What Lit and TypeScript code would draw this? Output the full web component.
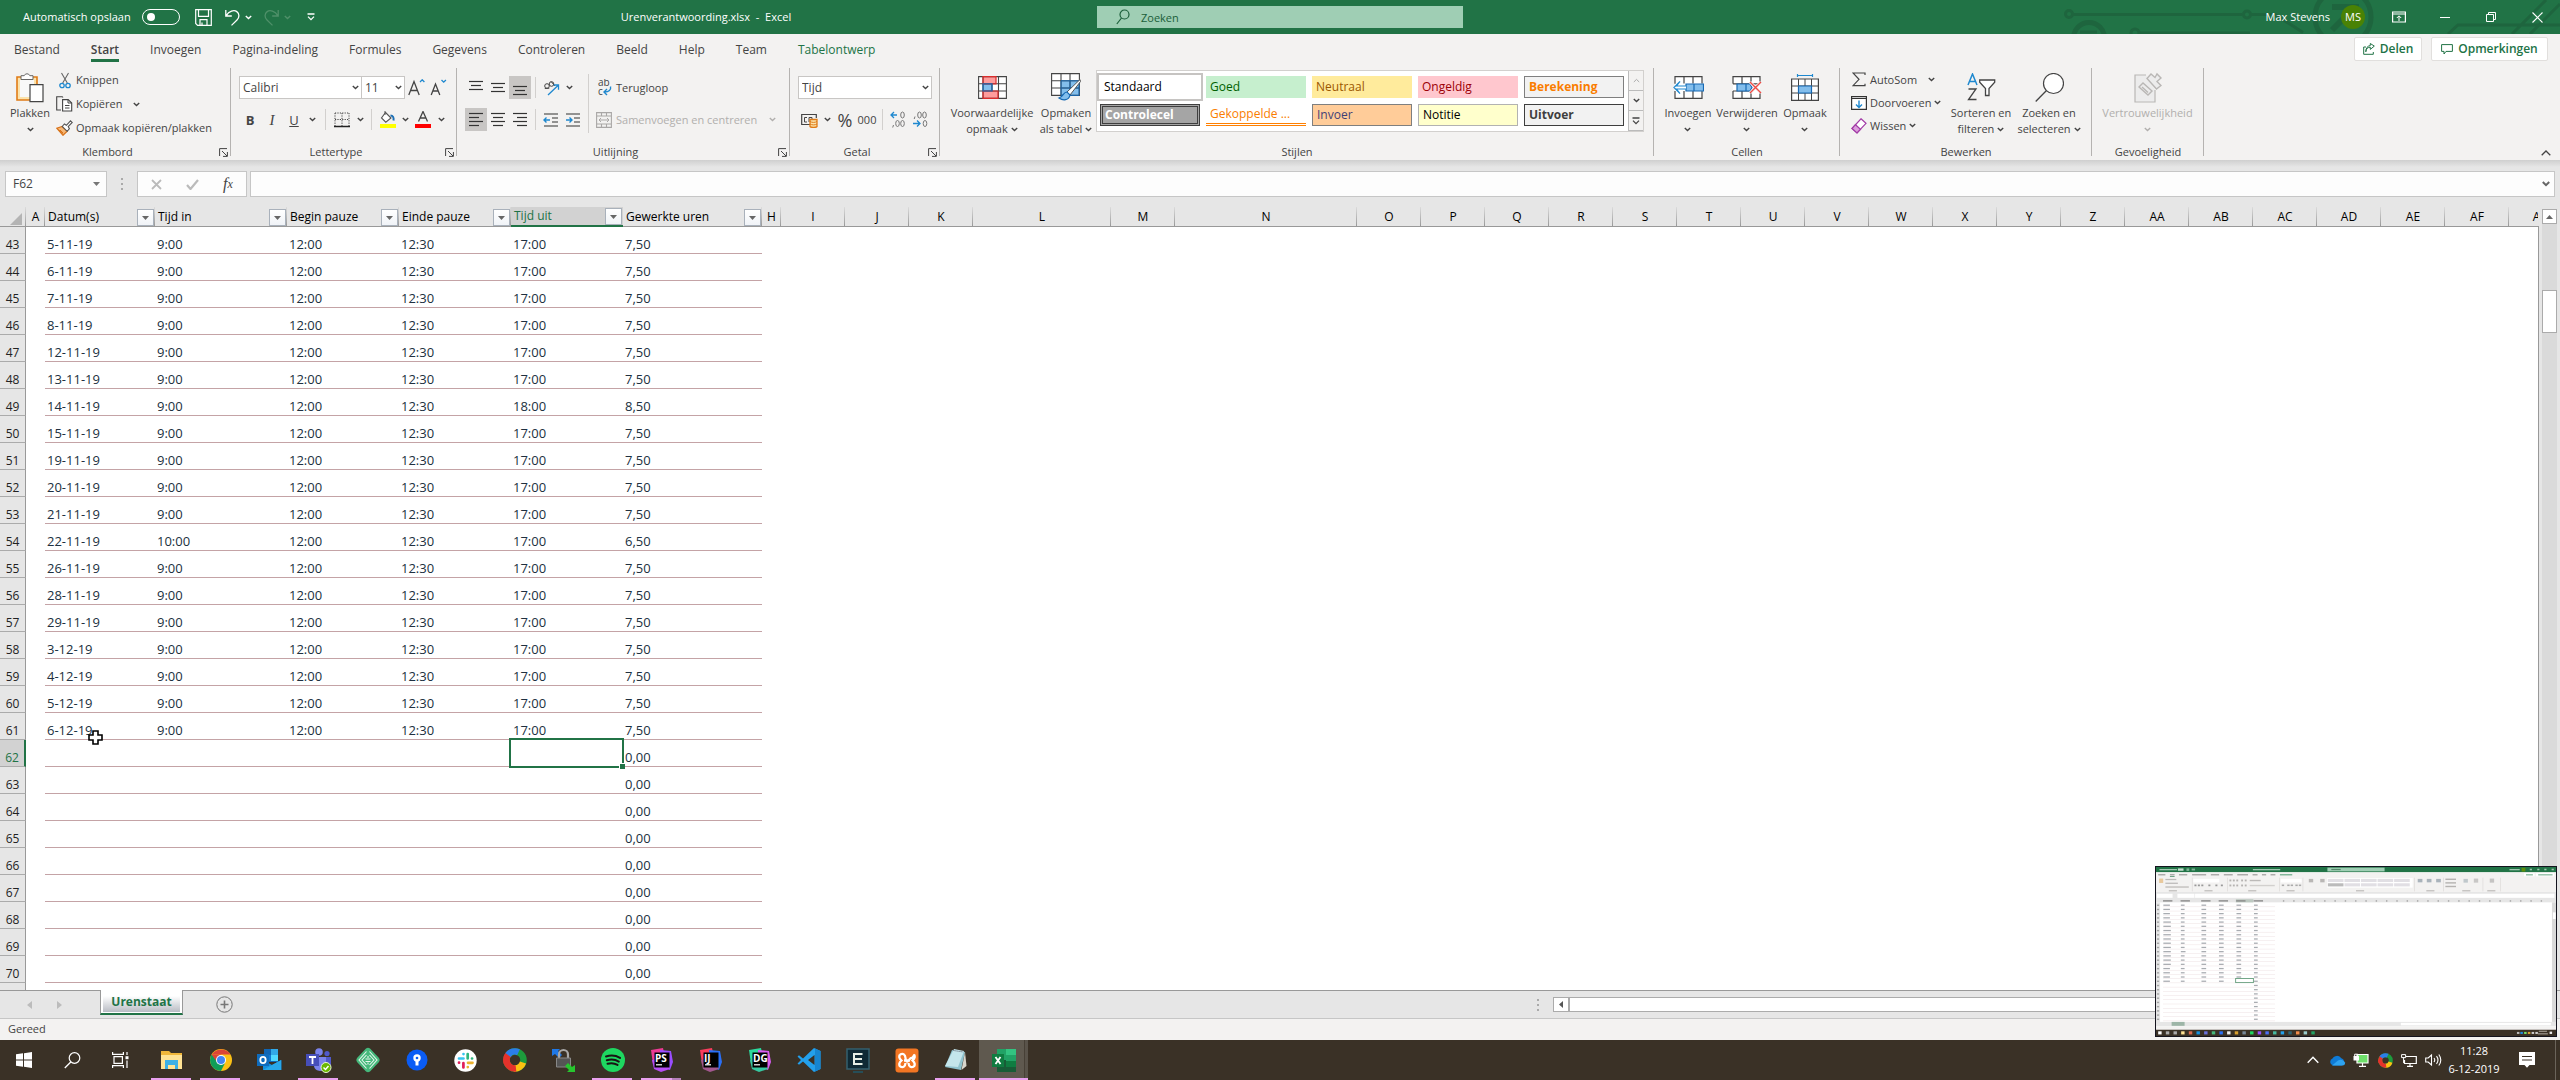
import { LitElement, html, css, svg, nothing } from "lit";
import { customElement } from "lit/decorators.js";
import { classMap } from "lit/directives/class-map.js";

type Part = unknown;

const draw = (w: number, h: number, body: Part) => html`<svg width=${w} height=${h} viewBox="0 0 ${w} ${h}" fill="none" aria-hidden="true">${body}</svg>`;

const chev = (color = "#444") => draw(7, 5, svg`<path d="M.8 1l2.7 2.6L6.2 1" stroke=${color} stroke-width="1.4"/>`);

/* ---------- ribbon icons ---------- */
const I = {
  save: draw(17, 17, svg`<path d="M.7 .7h15.6v15.6H2.6L.7 14.4zM3.5.7v6.6h10V.7M5 16v-5.300h7V16M7 13.500v2.500" stroke="#fff" stroke-width="1.200"/>`),
  undo: draw(15, 17, svg`<path d="M.8 1v6h6M1.200 6.600C4 2 9 .6 11.800 2.600c3 2.200 2.600 6 .2 8.400L6.500 16.400" stroke="#fff" stroke-width="1.300"/>`),
  redo: draw(15, 17, svg`<path d="M14.200 1v6h-6M13.800 6.600C11 2 6 .6 3.200 2.600c-3 2.200-2.600 6-.2 8.400l5.500 5.400" stroke="#4f9069" stroke-width="1.300"/>`),
  custom: draw(8, 8, svg`<path d="M.5 1h7M1 3.600l3 3 3-3" stroke="#fff" stroke-width="1.300"/>`),
  search: draw(14, 16, svg`<circle cx="8.500" cy="5.500" r="4.500" stroke="#1b5e39" stroke-width="1.200"/><path d="M5.500 9L.8 15" stroke="#1b5e39" stroke-width="1.200"/>`),
  display: draw(14, 12, svg`<path d="M.6 1h12.800v10H.6zM.6 3h12.800" stroke="#fff" stroke-width="1.200"/><path d="M7 10V5M4.800 7L7 4.800 9.200 7" stroke="#fff"/>`),
  min: draw(10, 10, svg`<path d="M0 5.500h10" stroke="#fff"/>`),
  restore: draw(10, 10, svg`<path d="M.5 2.500h7v7h-7zM2.500 2.500v-2h7v7h-2" stroke="#fff"/>`),
  close: draw(11, 11, svg`<path d="M.5.5l10 10M10.500.5l-10 10" stroke="#fff" stroke-width="1.100"/>`),
  share: draw(12, 12, svg`<path d="M3 4H.7v7.300h9.600V9" stroke="#217346"/><path d="M2.800 8.800C3 5.600 5 4.200 7.300 4.200V6.400l4-3.300-4-2.600v2C4.500 3 2.800 5 2.800 8.800z" stroke="#217346"/>`),
  comment: draw(12, 11, svg`<path d="M.6.6h10.800v6.800H5L3 10V7.400H.6z" stroke="#217346"/>`),
  paste: draw(28, 31, svg`<path d="M1 5h20v23H1z" fill="#fbe3ac" stroke="#e07b16" stroke-width="1.600"/><path d="M4 8h14v17H4z" fill="#f8f8f8"/><path d="M5 7.500V3.700h3.200a3 3 0 0 1 5.600 0H17v3.800z" fill="#fff" stroke="#666"/><path d="M14 12.700h13v17H14z" fill="#fff" stroke="#444" stroke-width="1.200"/>`),
  cut: draw(12, 17, svg`<path d="M2.500 1l5.800 10M9.500 1L3.700 11" stroke="#666" stroke-width="1.100"/><circle cx="3" cy="13.500" r="2.200" stroke="#1e88cf" stroke-width="1.300"/><circle cx="9" cy="13.500" r="2.200" stroke="#1e88cf" stroke-width="1.300"/>`),
  copy: draw(17, 16, svg`<path d="M5 14H.7V.7h5.600L7 1.500" stroke="#444" stroke-width="1.100"/><path d="M6.600 3.600h5.600l3.500 3.400v8H6.600z" fill="#fff" stroke="#444" stroke-width="1.100"/><path d="M12 3.700V7h3.500M9 9.500h4.500M9 12h4.500" stroke="#444"/>`),
  brush: draw(17, 16, svg`<path d="M.7 8.200l5.500-1.700 5 4.800L7 15.300z" fill="#f6b877" stroke="#d9731a" stroke-width="1.200"/><path d="M4 10l3 3M2.500 9.500l4.500 5" stroke="#d9731a"/><path d="M6.200 6.500L8.400 4l2 1.300L14.500.8l1.700 1.600-4 4.200 1.200 2-2.200 2.700z" fill="#fff" stroke="#555" stroke-width="1.100"/>`),
  big: draw(17, 17, svg`<path d="M.8 16L6 2.500 11.200 16M2.500 11.500h7" stroke="#444" stroke-width="1.300"/><path d="M12 3l2.200-2.200L16.400 3" stroke="#1e88cf" stroke-width="1.300"/>`),
  small: draw(17, 17, svg`<path d="M1.200 16L5.500 5l4.300 11M2.800 12h5.600" stroke="#444" stroke-width="1.300"/><path d="M11.500 1l2.200 2.200L15.900 1" stroke="#1e88cf" stroke-width="1.300"/>`),
  borders: draw(16, 16, svg`<path d="M1 1h14M1 1v13M15 1v13M8 1v13M1 7.500h14" stroke="#444" stroke-dasharray="1.200 1.200"/><path d="M0 14.500h16" stroke="#222" stroke-width="1.500"/>`),
  fill: draw(17, 17, svg`<path d="M6.500 1.500L12 7l-5.200 4.200L2.500 7z" fill="#fff" stroke="#555" stroke-width="1.100"/><path d="M6 4V0" stroke="#555"/><path d="M11.500 4.500c2.500 0 3.500 2 3 5" stroke="#1c6fb5" stroke-width="2"/><path d="M1 13h16v4H1z" fill="#ff0"/>`),
  color: draw(16, 17, svg`<path d="M3.500 10.500L8 .5l4.500 10M5 7h6" stroke="#444" stroke-width="1.300"/><path d="M0 13h16v4H0z" fill="#f00"/>`),
  orient: draw(17, 16, svg`<g stroke="#444"><circle cx="4" cy="6" r="2.300"/><path d="M1.800 8.500l4.500-.3M8 1.500l4 4.500"/><circle cx="8.500" cy="4" r="2.300"/></g><path d="M5 15L15 5.500M10.800 5h4.700v4.700" stroke="#1e88cf" stroke-width="1.300"/>`),
  wrap: draw(15, 17, svg`<text x="1" y="7" font-family="Open Sans, Noto Sans, sans-serif" font-size="10" fill="#444">ab</text><text x="1" y="16" font-family="Open Sans, Noto Sans, sans-serif" font-size="10" fill="#444">c</text><path d="M13.500 7.500c.8 3.500-1.500 5.500-6 5.500M10 10l-3 3 3 3" stroke="#1e88cf" stroke-width="1.400"/>`),
  merge: draw(16, 16, svg`<path d="M.6.6h14.800v14.800H.6zM.6 4h14.800M.6 12h14.800M5.500.6V4M10.500.6V4M5.500 12v3.400M10.500 12v3.400" stroke="#a9a7a6" stroke-width="1.100"/><path d="M3 8h10M5 6L3 8l2 2M11 6l2 2-2 2" stroke="#a9a7a6"/>`),
  currency: draw(17, 16, svg`<path d="M9 12.500H.7v-10h14.600V6" stroke="#444" stroke-width="1.200"/><path d="M6 5.500H3.500v4.500H6M8 10V5.500h3V8" stroke="#444"/><path d="M9 7.500h7v7c-1 1.300-6 1.300-7 0z" fill="#fbe3ac" stroke="#e07b16" stroke-width="1.300"/><path d="M9 9.500c2 1.200 5 1.200 7 0M9 12c2 1.200 5 1.200 7 0" stroke="#e07b16"/>`),
  decMore: draw(16, 17, svg`<path d="M7 4H1M4 1L1 4l3 3" stroke="#1e88cf" stroke-width="1.300"/><g stroke="#777"><ellipse cx="12.500" cy="4" rx="1.800" ry="3"/><ellipse cx="7.500" cy="12.500" rx="1.800" ry="3"/><ellipse cx="12.500" cy="12.500" rx="1.800" ry="3"/><path d="M3.500 14l-.8 2.500"/></g>`),
  decLess: draw(16, 17, svg`<path d="M1 12.500h7M5 9.500l3 3-3 3" stroke="#1e88cf" stroke-width="1.300"/><g stroke="#777"><ellipse cx="7.500" cy="4" rx="1.800" ry="3"/><ellipse cx="12.500" cy="4" rx="1.800" ry="3"/><ellipse cx="13" cy="12.500" rx="1.800" ry="3"/><path d="M3 5.500l-.8 2.500"/></g>`),
  cond: draw(29, 23, svg`<path d="M.6.6h27.800v21.800H.6z" fill="#fff"/><path d="M5 .6h13v7.200H5zM5 15h15v7.400H5z" fill="#ff9c9c"/><path d="M5 7.800h9V15H5z" fill="#83beec"/><path d="M.6.6h27.800v21.800H.6zM.6 7.800h27.800M.6 15h27.800M5 .6v21.800M14 7.800V15M20.500.6v21.800" stroke="#444" stroke-width="1.100"/><path d="M5 .6h13v7.200H5zM5 15h15v7.400H5z" stroke="#dd2c2c" stroke-width="1.200"/><path d="M5 7.800h9V15H5z" stroke="#1769b3" stroke-width="1.200"/>`),
  fmtTable: draw(30, 28, svg`<path d="M.6.6h27.800v21.800H.6z" fill="#fff"/><path d="M10 7.800h18.400v14.600H10z" fill="#83beec"/><path d="M.6.6h27.800v21.800H.6zM.6 7.800h27.800M.6 15h27.800M10 .6v21.800M19 .6v21.800" stroke="#444" stroke-width="1.100"/><path d="M10 7.800h18v14.600H10zM10 15h18M19 7.800v14" stroke="#1769b3"/><path d="M29 6.500L16 19l3 3L29.500 8.500z" fill="#fff" stroke="#555"/><path d="M16 19c-4 0-3.500 5-8 6 4 3 10 2.500 11-3z" fill="#83beec" stroke="#1769b3" stroke-width="1.200"/>`),
  insert: draw(32, 23, svg`<path d="M3 .6h27v21.800H3z" fill="#fff"/><path d="M3 7.800V.6h27v7M3 15v7.400h27V15M12 .6v7M21 .6v7M12 15v7.400M21 15v7.400" stroke="#444" stroke-width="1.200"/><path d="M14 8h17.500v7H14zM22 8v7" fill="#83beec" stroke="#1769b3" stroke-width="1.200"/><path d="M14 10H4.500L8 5.500 2 11.500l6 6L4.500 13H14" fill="#fff" stroke="#1e88cf" stroke-width="1.200"/>`),
  remove: draw(30, 23, svg`<path d="M1 .6h27v21.800H1z" fill="#fff"/><path d="M1 7.800V.6h27v7M1 7.800h27M1 15v7.400h27V17M1 15h18M10 .6v7M19 .6v7M10 15v7.400M19 15v7.400" stroke="#444" stroke-width="1.200"/><path d="M5 8h13l2 3.500-2 3.500H5zM14 8v7" fill="#83beec" stroke="#1769b3" stroke-width="1.200"/><path d="M18 6l11 11M29 6L18 17" stroke="#f3f2f1" stroke-width="3"/><path d="M18 6l11 11M29 6L18 17" stroke="#ef4b45" stroke-width="1.400"/>`),
  format: draw(28, 27, svg`<path d="M.6 5h26.800v21.400H.6z" fill="#fff" stroke="#444" stroke-width="1.200"/><path d="M.6 12h26.800M.6 19h26.800M7.500 5v21.400M20.500 5v21.400M14 5v7M14 19v7" stroke="#444"/><path d="M7.500 12h13v7h-13z" fill="#83beec" stroke="#1769b3" stroke-width="1.200"/><path d="M6.500 1.500h15M6.500 0v3M21.500 0v3" stroke="#1e88cf" stroke-width="1.200"/>`),
  sum: draw(14, 15, svg`<path d="M13 3V1H1l6 6.300-6 6.400h12v-2" stroke="#444" stroke-width="1.200"/>`),
  fillDown: draw(16, 14, svg`<path d="M.6.6h14.800v12.800H.6z" fill="#fff" stroke="#333" stroke-width="1.200"/><path d="M.6 2.500h14.800" stroke="#333"/><path d="M8 4.500v7M5 8.500l3 3 3-3" stroke="#1e88cf" stroke-width="1.400"/>`),
  erase: draw(16, 16, svg`<path d="M10 .8l5 4.500L6 15 1 10.500z" fill="#fff" stroke="#a23ba6" stroke-width="1.200"/><path d="M4.500 6.700l5 4.500L6 15 1 10.500z" fill="#dc9fdd" stroke="#a23ba6" stroke-width="1.200"/>`),
  sort: draw(29, 28, svg`<path d="M1 12L5.500 1l4.500 11M2.500 8.500h6" stroke="#1e88cf" stroke-width="1.500"/><path d="M1.500 16h7.500L1.500 26.500h8" stroke="#444" stroke-width="1.300"/><path d="M12.700 7h15v2.300l-5.700 6.200v7h-3.500v-7l-5.800-6.200z" fill="#fff" stroke="#444" stroke-width="1.300"/>`),
  find: draw(29, 29, svg`<circle cx="18.500" cy="10.500" r="10" fill="#fff" stroke="#444" stroke-width="1.200"/><path d="M11.500 17.500L.7 28.500" stroke="#444" stroke-width="1.300"/>`),
  label: draw(28, 31, svg`<path d="M12 3H1v27h20V18" stroke="#b9b7b5" stroke-width="1.200" fill="#ececec"/><g stroke="#b9b7b5" stroke-width="1.400"><path d="M5 15l4-4 9 8-4 4zM8 15l6 5.500"/><path d="M13 6.500l4-4.500 4 3.500 2-3.500 4 4-4 3.500 4 4-4.500 3.500z" fill="#ececec"/></g>`),
  launcher: draw(9, 9, svg`<path d="M.6 8V.6H8M3 3l5 5M8.400 4v4.400H4" stroke="#444"/>`),
};

const lines = (rows: [number, number, number][]) =>
  draw(16, 16, rows.map(([x1, x2, y]) => svg`<path d="M${x1} ${y}.500H${x2}" stroke="#333" stroke-width="1.200"/>`));
const A = {
  top: lines([[1, 15, 1], [3, 13, 5], [1, 15, 9]]),
  middle: lines([[1, 15, 3], [3, 13, 7], [1, 15, 11]]),
  bottom: lines([[1, 15, 6], [3, 13, 10], [1, 15, 14]]),
  left: lines([[1, 15, 1], [1, 11, 5], [1, 15, 9], [1, 11, 13]]),
  center: lines([[1, 15, 1], [3, 13, 5], [1, 15, 9], [3, 13, 13]]),
  right: lines([[1, 15, 1], [5, 15, 5], [1, 15, 9], [5, 15, 13]]),
};
const indent = (d: string) => draw(16, 16, svg`<path d="M1 2h14M9 6h6M9 10h6M1 14h14" stroke="#333" stroke-width="1.200"/><path d=${d} stroke="#1e88cf" stroke-width="1.400"/>`);

/* ---------- taskbar icons ---------- */
const jb = (txt: string, a: string, b: string, c: string) => draw(24, 24, svg`
  <path d="M1 2l12-2 3 14L3 16z" fill=${a}/><path d="M10 2l11 1 2 11-3 8-10-4z" fill=${b}/><path d="M2 12l10-3 8 12-9 3-7-3z" fill=${c}/>
  <path d="M4.500 4.500h15v15h-15z" fill="#000"/><text x="5" y="13.500" font-family="Open Sans, Noto Sans, sans-serif" font-weight="700" font-size="10" fill="#fff">${txt}</text><path d="M6 16.800h6" stroke="#fff" stroke-width="1.200"/>`);
const swirl = (s: number) => html`<svg width=${s} height=${s} viewBox="0 0 24 24" fill="none" aria-hidden="true">
  <circle cx="12" cy="12" r="8.500" stroke="#1d9b3c" stroke-width="6.500"/>
  <path d="M4 15A8.500 8.500 0 0 1 6.500 5.500" stroke="#e5322b" stroke-width="6.500"/><path d="M5 7A8.500 8.500 0 0 1 15.500 4.300" stroke="#2b7de9" stroke-width="6.500"/>
  <path d="M20 14.500A8.500 8.500 0 0 1 11 20.400" stroke="#fbc112" stroke-width="6.500"/><path d="M13 20.400A8.500 8.500 0 0 1 3.600 11" stroke="#e5322b" stroke-width="6.500"/></svg>`;
const T = {
  start: draw(16, 16, svg`<path d="M0 2.300L7 1.300v6.200H0zM8 1.200L16 0v7.500H8zM0 8.500h7v6.200l-7-1zM8 8.500h8V16l-8-1.200z" fill="#fff"/>`),
  search: draw(17, 17, svg`<circle cx="10.500" cy="6" r="5.300" stroke="#fff" stroke-width="1.200"/><path d="M6.800 10L.8 16" stroke="#fff" stroke-width="1.300"/>`),
  view: draw(17, 16, svg`<path d="M.6 0v2.400h10.800V0M2 4.600h8.400v6.800H2zM.6 16v-2.400h10.800V16M15 0v3M15 8.500V16" stroke="#fff" stroke-width="1.200"/><path d="M13.500 4.200h3v3h-3z" fill="#fff"/>`),
  explorer: draw(23, 20, svg`<path d="M1 1h8l2 2h11v16H1z" fill="#f0b73a"/><path d="M1 5h21v14H1z" fill="#ffe394"/><path d="M5 10h13v9h-3v-4H8v4H5z" fill="#3cb0e5"/>`),
  chrome: draw(24, 24, svg`<circle cx="12" cy="12" r="11" fill="#fbc116"/><path d="M12 12L2.500 6.500A11 11 0 0 0 12 23l4-8z" fill="#0f9d58"/><path d="M3 6.500A11 11 0 0 1 21.500 6.500H12z" fill="#db4437"/><path d="M2.500 6.500H12L8 14z" fill="#db4437"/><circle cx="12" cy="12" r="5" fill="#fff"/><circle cx="12" cy="12" r="4" fill="#4285f4"/>`),
  outlook: draw(25, 24, svg`<path d="M7 1h14v13H7z" fill="#1066b5"/><path d="M14 1h7v6h-7z" fill="#32a9e7"/><path d="M7 7h7v6H7z" fill="#0f78d4"/><path d="M14 7h7v6h-7z" fill="#50d9ff"/><path d="M6 12l9 5 9.500-5v10H6z" fill="#1490df"/><path d="M6 22l18-10v10z" fill="#28a8ea"/><path d="M0 6h12v12H0z" fill="#0f6cbd"/><ellipse cx="6" cy="12" rx="2.700" ry="3.200" stroke="#fff" stroke-width="1.800"/>`),
  teams: draw(26, 25, svg`<circle cx="13" cy="4" r="3.800" fill="#7b83eb"/><circle cx="21" cy="5.500" r="2.600" fill="#5059c9"/><path d="M16 9h9v7c0 4-5 5-8 3z" fill="#5059c9"/><path d="M8 9h12v9c0 6-11 7-12 0z" fill="#7b83eb"/><path d="M0 6h13v12H0z" fill="#464eb8"/><path d="M3 9h7M6.500 9v7" stroke="#fff" stroke-width="1.800"/><circle cx="20" cy="19.500" r="5" fill="#6bb700" stroke="#e9f5d5"/><path d="M17.500 19.500l2 2 3-3.500" stroke="#fff" stroke-width="1.400"/>`),
  green: draw(26, 26, svg`<path d="M11 1.500q2-1.500 4 0l9 9.500q1.500 2 0 4l-9 9.500q-2 1.500-4 0L2 15q-1.500-2 0-4z" fill="#45b87b"/><path d="M11.500 4.500L4 13l7.500 8.500M14.500 4.500L22 13l-7.500 8.500M11.500 8L7 13l4.500 5M14.500 8l4.500 5-4.500 5M10.500 12h5M10.500 14.500h5M13 9v2M13 15.500v2" stroke="#e5f7ed" stroke-width="1.100"/>`),
  blue: draw(22, 22, svg`<circle cx="11" cy="11" r="10.500" fill="#0a5cf5"/><circle cx="11" cy="9" r="3.700" fill="#fff"/><path d="M9.500 12h3v4.500h-3z" fill="#fff"/><circle cx="11" cy="9" r="1.300" fill="#0a5cf5"/>`),
  slack: draw(23, 23, svg`<circle cx="11.500" cy="11.500" r="11.200" fill="#fff"/><g stroke-width="2.700" stroke-linecap="round"><path d="M9.500 5v.1M5 9.500h4.500" stroke="#36c5f0"/><path d="M13.700 5v4.500M18 9.500h.1" stroke="#2eb67d"/><path d="M14 13.800h4.500M13.800 18v.1" stroke="#ecb22e"/><path d="M9.400 14v4.500M5 13.700h.1" stroke="#e01e5a"/></g>`),
  lock: draw(25, 25, svg`<path d="M1 1h8l-2 2 4 4-3 3-4-4-3 2z" fill="#1f78e6"/><path d="M8 11V6.500a4.500 4.500 0 0 1 9 0V11" stroke="#a8a8a8" stroke-width="2.200"/><path d="M5.500 10h14v9h-14z" fill="#555" stroke="#888"/><path d="M24 24h-8l2-2-4-4 3-3 4 4 3-2z" fill="#27c62e"/>`),
  spotify: draw(24, 24, svg`<circle cx="12" cy="12" r="12" fill="#1ed760"/><path d="M5 8.500c5-1.500 10-1 14 1.400M5.800 12.300c4-1.200 8.500-.8 12 1.300M6.500 15.800c3.500-1 7-.7 10 1.100" stroke="#191414" stroke-width="2" stroke-linecap="round"/>`),
  ps: jb("PS", "#ee3a95", "#9a4dff", "#b74cf5"),
  ij: jb("IJ", "#f83d5d", "#2a6ff5", "#a2578e"),
  dg: jb("DG", "#2bd89d", "#d85cf0", "#36c8a0"),
  code: draw(24, 24, svg`<path d="M17 0l6.500 3v18L17 24 6 13.500l-4 3.200L.5 15.500 4 12 .5 8.500 2 7.300l4 3.200zM17.500 7L11 12l6.500 5z" fill="#23a0ec" fill-rule="evenodd"/><path d="M18 0.500l5.500 2.500v18L18 23.500z" fill="#1685d1"/>`),
  eterm: draw(24, 25, svg`<path d="M1 1h22v20H1z" fill="#0f2a35" stroke="#35606f" stroke-width="1.500"/><path d="M16.500 6H8v10h8.500M8 11h8" stroke="#e6efe6" stroke-width="2"/><path d="M7 24h10" stroke="#20586a" stroke-width="1.500"/>`),
  xampp: draw(24, 25, svg`<rect x=".5" y=".5" width="23" height="24" rx="3" fill="#f37623"/><path d="M5 6.500q5-2 5.500 3.500t3 2.500 3-2.500 3-3.500M5 18.500q5 2 5.500-3.500M19 18.500q-5 2-5.500-3.500M5 6.500q-2 3 1.500 6-3.500 3-1.500 6M19 6.500q2 3-1.500 6 3.500 3 1.500 6M9 12.500h6" stroke="#fff" stroke-width="2.300"/>`),
  notepad: draw(24, 24, svg`<path d="M8 2l13 2-4 18-16-3z" fill="#8fc3cf"/><path d="M10 1l10 2-6 16L1 18z" fill="#c4e6ec"/><path d="M21 4l1.500 14-5 4z" fill="#d9d6cd"/><path d="M9.500 2.500l10 1.500" stroke="#556" stroke-dasharray="1 1"/>`),
  excel: draw(24, 23, svg`<path d="M5 0h9v11H5z" fill="#21a366"/><path d="M14 0h10v6H14z" fill="#33c481"/><path d="M14 6h10v6H14z" fill="#21a366"/><path d="M5 11h9v12H5z" fill="#185c37"/><path d="M14 12h10v6H14z" fill="#107c41"/><path d="M14 18h10v5H14z" fill="#185c37"/><path d="M0 5h12v13H0z" fill="#107c41"/><path d="M3.500 8l5 7M8.500 8l-5 7" stroke="#fff" stroke-width="1.800"/>`),
  up: draw(12, 8, svg`<path d="M.7 6.800L6 1.200l5.300 5.600" stroke="#fff" stroke-width="1.400"/>`),
  cloud: draw(17, 11, svg`<path d="M4 10.500a3.700 3.700 0 0 1-.5-7A5 5 0 0 1 12 3a4 4 0 0 1 1 7.500z" fill="#0f7bd6"/><path d="M3 10.500l6-5c3-1.500 5-.5 7 2 .5 2-1 3-2.500 3z" fill="#2ea3f0"/>`),
  pc: draw(16, 14, svg`<path d="M4 1.500h11v8.500H4z" fill="#6fe06b" stroke="#fff" stroke-width="1.200"/><path d="M9.500 10v3M6 13.300h7" stroke="#fff" stroke-width="1.200"/><path d="M.5 3h5.500v4.500H.5z" fill="#fff"/><path d="M1.700 3V1.200h3V3" stroke="#fff"/>`),
  net: draw(16, 13, svg`<path d="M5 2.500h10.300v7H3.500V6M9 9.500v3M6 12.400h6" stroke="#fff" stroke-width="1.200"/><path d="M.6.600h4v3h-4zM2.600 3.600V9" stroke="#fff"/>`),
  sound: draw(17, 14, svg`<path d="M.7 5h2.500L6.500 2v10L3.200 9H.7zM9 5q1.500 2 0 4M11.500 3.200q3 3.800 0 7.600M13.800 1.500q4 5.500 0 11" stroke="#fff" stroke-width="1.100"/>`),
  note: draw(16, 16, svg`<path d="M0 0h16v13h-5.500L8 15.800 5.500 13H0z" fill="#fff"/><path d="M3 4.500h10M3 8h10" stroke="#3a3126"/>`),
};

const TASKS: [string, Part, string][] = [
  ["Verkenner", T.explorer, "run"], ["Chrome", T.chrome, "run"], ["Outlook", T.outlook, ""], ["Teams", T.teams, "run"],
  ["Git-client", T.green, ""], ["Wachtwoorden", T.blue, ""], ["Slack", T.slack, ""], ["Synchronisatie", swirl(24), ""],
  ["SFTP", T.lock, ""], ["Spotify", T.spotify, "run"], ["PhpStorm", T.ps, "run multi"], ["IntelliJ", T.ij, ""],
  ["DataGrip", T.dg, ""], ["Code", T.code, ""], ["Terminal", T.eterm, ""], ["XAMPP", T.xampp, ""],
  ["Kladblok", T.notepad, "run"], ["Excel", T.excel, "active"],
];

/* ---------- sheet data ---------- */
const COLS: [string, number, boolean?][] = [
  ["A", 19], ["Datum(s)", 110, true], ["Tijd in", 132, true], ["Begin pauze", 112, true], ["Einde pauze", 112, true],
  ["Tijd uit", 112, true], ["Gewerkte uren", 139, true], ["H", 19], ["I", 64], ["J", 64], ["K", 64], ["L", 138], ["M", 64], ["N", 182],
  ..."O P Q R S T U V W X Y Z AA AB AC AD AE AF AG".split(" ").map((n): [string, number] => [n, 64]),
];
const DATES = ["5-11-19", "6-11-19", "7-11-19", "8-11-19", "12-11-19", "13-11-19", "14-11-19", "15-11-19", "19-11-19", "20-11-19",
  "21-11-19", "22-11-19", "26-11-19", "28-11-19", "29-11-19", "3-12-19", "4-12-19", "5-12-19", "6-12-19"];
const ROWS = Array.from({ length: 29 }, (_, i) => {
  const n = 43 + i;
  const d = DATES[i];
  if (!d) return { n, cells: ["", "", "", "", "", n > 70 ? "" : "0,00"] };
  return { n, cells: [d, n === 54 ? "10:00" : "9:00", "12:00", "12:30", n === 49 ? "18:00" : "17:00", n === 49 ? "8,50" : n === 54 ? "6,50" : "7,50"] };
});

const TABS = ["Bestand", "Start", "Invoegen", "Pagina-indeling", "Formules", "Gegevens", "Controleren", "Beeld", "Help", "Team", "Tabelontwerp"];
const STYLES: [string, string][] = [["Standaard", "std"], ["Goed", "good"], ["Neutraal", "neutral"], ["Ongeldig", "bad"], ["Berekening", "calc"],
  ["Controlecel", "check"], ["Gekoppelde ...", "linked"], ["Invoer", "input"], ["Notitie", "note"], ["Uitvoer", "output"]];

const mini = () => {
  const r = (x: number, y: number, w: number, h: number, f: string) => svg`<rect x=${x} y=${y} width=${w} height=${h} fill=${f}/>`;
  const tabX = [[14, 46], [89, 30], [147, 53], [231, 90], [351, 53], [434, 57], [520, 69], [618, 32], [678, 27], [733, 31], [793, 79]];
  const colX = [45, 157, 289, 401, 513, 625];
  const icons = ["#fff", "#aaa", "#aaa", "#ffe394", "#db6a4f", "#1490df", "#6a72dd", "#45b87b", "#2a6ff5", "#eee", "#d8a030", "#789", "#1ed760", "#9a4dff", "#4a6ff5", "#46b8a0", "#23a0ec", "#2c6475", "#f08a4a", "#9cc", "#21a366"];
  return html`<svg class="mini" viewBox="0 0 2560 1080" preserveAspectRatio="none" aria-hidden="true">
    ${r(0, 0, 2560, 1080, "#fff")}${r(0, 0, 2560, 34, "#217346")}${r(0, 34, 2560, 126, "#f3f2f1")}${r(0, 160, 2560, 66, "#e6e6e6")}
    ${r(1097, 4, 366, 24, "#9fceb4")}${r(1122, 12, 60, 8, "#568a6c")}${r(22, 13, 112, 8, "#a6cbb5")}${r(620, 13, 175, 8, "#a6cbb5")}${r(140, 9, 36, 15, "#c7dfd0")}${r(195, 9, 18, 16, "#7fb496")}${r(228, 10, 22, 12, "#7fb496")}${r(2262, 13, 66, 8, "#a6cbb5")}${r(2340, 5, 24, 24, "#5f8f0a")}
    ${[2392, 2440, 2485, 2532].map((x) => r(x, 11, 14, 10, "#9fc7af"))}
    ${tabX.map(([x, w], i) => r(x, 45, w, 9, i === 10 ? "#7db395" : "#a9a8a7"))}${r(89, 58, 30, 4, "#217346")}${r(2355, 38, 68, 22, "#fff")}${r(2431, 38, 117, 22, "#fff")}${r(2368, 46, 44, 8, "#86b89b")}${r(2446, 46, 92, 8, "#86b89b")}
    ${[230, 456, 789, 939, 1653, 1839, 2091, 2203].map((x) => r(x, 68, 3, 88, "#d2d0ce"))}
    ${r(20, 74, 26, 28, "#e9c99c")}${[76, 100, 124].map((y) => r(60, y, [70, 80, 150][(y - 76) / 24], 8, "#bcbab8"))}${r(239, 76, 166, 23, "#fff")}${r(798, 76, 134, 23, "#fff")}
    ${[246, 268, 290, 335, 380, 415].map((x) => r(x, 112, 13, 11, "#999"))}${[470, 492, 514, 545, 568].map((x) => svg`${r(x, 80, 12, 12, "#b5b3b1")}${r(x, 112, 12, 12, "#b5b3b1")}`)}
    ${r(600, 82, 70, 9, "#bcbab8")}${r(600, 114, 160, 9, "#d2d0ce")}${[805, 840, 862, 892, 914].map((x) => r(x, 112, 15, 10, "#aaa"))}
    ${[978, 1051].map((x) => r(x, 76, 28, 22, "#b9b7b5"))}${r(1096, 70, 547, 62, "#fff")}
    ${[0, 1, 2, 3, 4].map((i) => svg`${r(1100 + i * 106, 76, 100, 20, "#e1dfe4")}${r(1100 + i * 106, 104, 100, 20, i === 0 ? "#bbb" : "#e1dfe4")}`)}
    ${[1675, 1733, 1793].map((x) => r(x, 76, 30, 22, "#a9b3bb"))}${[1852, 1852, 1852].map((x, i) => r(x, 74 + i * 23, 68, 9, "#b5b3b1"))}${r(1968, 76, 28, 24, "#c0c8cc")}${r(2034, 74, 28, 26, "#c8c7c6")}${r(2136, 74, 28, 26, "#c5c4c3")}
    ${[82, 310, 590, 835, 1280, 1730, 1960, 2120].map((x) => r(x, 148, 52, 8, "#bfbdbb"))}
    ${r(5, 171, 101, 26, "#fff")}${r(137, 171, 109, 26, "#fff")}${r(250, 171, 2300, 26, "#fff")}${r(511, 206, 112, 20, "#bdc9c1")}
    ${colX.map((x) => r(x, 212, 60, 9, "#8b8b8b"))}${Array.from({ length: 26 }, (_, i) => r(812 + i * 66, 213, 9, 8, "#999"))}
    ${r(0, 226, 26, 764, "#e6e6e6")}
    ${ROWS.slice(0, 28).map((row, i) => svg`${r(45, 253 + i * 27, 717, 3, "#ecdfe0")}${r(6, 240 + i * 27, 14, 9, "#a5a5a5")}${row.cells.map((c, k) => c && !(i === 18 && k === 4) ? r(colX[k] + 2, 240 + i * 27, c.length * 6, 8, "#a8abb0") : nothing)}`)}
    <rect x="510" y="712" width="113" height="27" fill="#fff" stroke="#4f9069" stroke-width="5"/>
    ${r(0, 990, 2560, 28, "#e6e6e6")}${r(100, 990, 83, 25, "#9db5a7")}${r(1567, 996, 960, 16, "#fff")}${r(0, 1018, 2560, 22, "#f3f2f1")}${r(2534, 226, 26, 764, "#dadada")}${r(2540, 290, 18, 42, "#fff")}
    ${r(0, 1040, 2560, 40, "#3a3126")}${icons.map((c, i) => r(14 + i * 49, 1050, 22, 20, c))}${[2310, 2332, 2356, 2380, 2404, 2428].map((x, i) => r(x, 1054, 16, 13, ["#bbb", "#1f8be0", "#6fe06b", "#d8a030", "#ccc", "#ccc"][i]))}${r(2450, 1046, 52, 8, "#9a938a")}${r(2444, 1062, 64, 8, "#9a938a")}${r(2519, 1052, 16, 15, "#eee")}
  </svg>`;
};

@customElement("app-root")
export class AppRoot extends LitElement {
  static styles = css`
    :host { display: flex; flex-direction: column; height: 100vh; position: relative; overflow: hidden; background: #e6e6e6;
      font: 11px/16px "Open Sans", "Noto Sans", sans-serif; color: #444; }
    * { box-sizing: border-box; }
    svg { display: block; flex: none; }
    button, select, input { font: inherit; color: inherit; border: 0; background: none; padding: 0; margin: 0; border-radius: 0; }
    button { display: flex; align-items: center; justify-content: center; white-space: nowrap; }

    .title { display: grid; grid-template-columns: 1fr 366px 1fr; align-items: center; height: 34px; flex: none; background: #217346; color: #fff; position: relative; }
    .circuit { position: absolute; right: 0; top: 0; }
    .left, .right { display: flex; align-items: center; height: 34px; position: relative; }
    .left { padding-left: 23px; }
    .right { justify-content: flex-end; }
    .autosave { width: 119px; }
    .toggle { width: 38px; height: 16px; border: 1px solid #fff; border-radius: 8px; justify-content: flex-start; padding-left: 4px; }
    .knob { width: 8px; height: 8px; border-radius: 4px; background: #fff; }
    .quick { display: flex; align-items: center; margin-left: 15px; gap: 5px; }
    .quick .undo { margin-left: 8px; }
    .quick .redo { margin-left: 7px; }
    .quick .custom { margin-left: 11px; }
    .doc { flex: 1; text-align: center; white-space: pre; font-size: 11px; }
    .find { display: flex; align-items: center; gap: 11px; height: 22px; background: #9fceb4; padding-left: 19px; color: #1b5e39; position: relative; }
    .find input { flex: 1; height: 22px; outline: 0; }
    .find input::placeholder { color: #1b5e39; opacity: 1; }
    .avatar { width: 24px; height: 24px; border-radius: 12px; background: #498205; margin: 0 11px; display: grid; place-items: center; }
    .win { width: 46px; height: 34px; }

    .tabs { display: flex; height: 34px; flex: none; background: #f3f2f1; padding: 0 12px 0 14px; font-size: 12px; gap: 31px; }
    .tabs a { color: #444; text-decoration: none; height: 28px; padding-top: 8px; border-bottom: 3px solid transparent; white-space: nowrap; }
    .tabs a.on { font-weight: 600; border-color: #217346; }
    .tabs a.ctx { color: #217346; }
    .acts { margin-left: auto; display: flex; gap: 9px; padding-top: 3px; }
    .acts button { height: 24px; background: #fff; border: 1px solid #e1dfdd; border-radius: 2px; color: #217346; font-weight: 600; gap: 5px; }
    .share { width: 68px; }
    .comments { width: 117px; }

    .ribbon { display: flex; height: 92px; flex: none; background: #f3f2f1; position: relative; }
    .group { display: flex; flex-direction: column; flex: none; background: linear-gradient(#b5b3b1, #b5b3b1) right top / 1px 88px no-repeat; }
    .body { display: flex; height: 76px; flex: none; }
    .foot { display: flex; height: 16px; align-items: center; }
    .foot span { flex: 1; text-align: center; }
    .foot button { width: 16px; }
    .clip { width: 231px; } .font { width: 226px; } .align { width: 333px; } .num { width: 150px; } .styles { width: 714px; } .cells { width: 186px; } .edit { width: 252px; } .sens { width: 112px; }
    .big { flex: none; flex-direction: column; justify-content: flex-start; padding-top: 3px; gap: 2px; }
    .big .pic { display: grid; place-items: center; height: 32px; }
    .big .lab { display: flex; flex-direction: column; align-items: center; }
    .big .ln { display: flex; align-items: center; justify-content: center; gap: 3px; height: 16px; }
    .w-paste { width: 44px; margin: 0 4px 0 8px; }
    .w-cond { width: 96px; margin-left: 4px; }
    .w-tab { width: 52px; margin-right: 4px; }
    .w-ins { width: 52px; margin-left: 8px; }
    .w-del { width: 66px; }
    .w-fmt { width: 50px; }
    .w-sort { width: 70px; }
    .w-find { width: 66px; }
    .w-sens { width: 111px; }
    .off { color: #b1afad; }
    .rows { display: flex; flex-direction: column; }
    .rows button { height: 24px; justify-content: flex-start; gap: 3px; }
    .rows .slot { width: 17px; display: grid; place-items: center; }
    .rows .gap { margin-left: 8px; }
    .edit .rows { width: 96px; margin-left: 10px; }
    .edit .rows button { height: 23px; }
    .two { display: flex; flex-direction: column; gap: 9px; padding: 8px 0 0 8px; }
    .line { display: flex; height: 23px; align-items: center; }
    .ib { width: 22px; height: 23px; flex: none; }
    .ib.on { background: #c8c6c4; }
    .ch { width: 14px; height: 23px; flex: none; }
    .sp { width: 1px; height: 21px; background: #d2d0ce; margin: 0 4px; flex: none; }
    .sp.wide { margin: 0 5px 0 6px; }
    .sel { position: relative; height: 23px; flex: none; }
    .sel select { appearance: none; width: 100%; height: 23px; border: 1px solid #c8c6c4; background: #fff; padding: 0 3px; font-size: 12px; }
    .sel svg { position: absolute; right: 3px; top: 9px; pointer-events: none; }
    .fam { width: 123px; } .size { width: 44px; margin-left: -1px; } .nf { width: 134px; }
    .b { font-weight: 700; font-size: 13px; } .i { font-style: italic; font-family: "Liberation Serif", serif; font-size: 15px; } .u { text-decoration: underline; font-size: 13px; }
    .pct { font-size: 18px; }
    .tall { width: 1px; height: 59px; background: #d2d0ce; margin: 6px 7px 0 4px; }
    .wrapcol { display: flex; flex-direction: column; gap: 9px; padding-top: 8px; }
    .wrapcol button { height: 23px; justify-content: flex-start; gap: 4px; }
    .wrapcol .slot { width: 16px; display: grid; place-items: center; }
    .wrapcol .gap { margin-left: 8px; }
    .gallery { display: flex; height: 62px; margin-top: 2px; border: 1px solid #d2d0ce; background: #fff; }
    .swatches { display: grid; grid-template-columns: repeat(5, 100px); gap: 6px; padding: 5px 4px 5px 3px; grid-auto-rows: 22px; }
    .swatches button { justify-content: flex-start; padding: 0 4px; font-size: 12px; height: 22px; }
    .std { color: #000; outline: 2px solid #c6c4c2; outline-offset: 1px; }
    .good { background: #c6efce; color: #006100; }
    .neutral { background: #ffeb9c; color: #9c5700; }
    .bad { background: #ffc7ce; color: #9c0006; }
    .swatches .calc { background: #f2f2f2; color: #fa7d00; border: 1px solid #7f7f7f; font-weight: 700; }
    .swatches .check { background: #a5a5a5; color: #fff; border: 3px double #3f3f3f; font-weight: 700; padding: 0 2px; }
    .swatches .linked { color: #fa7d00; border-bottom: 3px double #ff8001; }
    .swatches .input { background: #ffcc99; color: #3f3f76; border: 1px solid #7f7f7f; }
    .swatches .note { background: #ffffcc; color: #000; border: 1px solid #b2b2b2; }
    .swatches .output { background: #f2f2f2; color: #3f3f3f; border: 1px solid #3f3f3f; font-weight: 700; }
    .gs { display: grid; grid-template-rows: 20px 20px 1fr; width: 15px; border-left: 1px solid #bbb; background: #f3f2f1; }
    .gs button { border-bottom: 1px solid #bbb; }
    .collapse { position: absolute; right: 8px; bottom: 2px; width: 12px; height: 10px; }

    .formula { display: flex; height: 47px; flex: none; padding: 11px 5px 9px; background: linear-gradient(#cfcfcf, #e6e6e6 7px); font-size: 12px; }
    .box { display: flex; align-items: center; height: 26px; background: #fdfdfd; border: 1px solid #c6c6c6; }
    .name { width: 102px; padding-right: 6px; }
    .name input { width: 80px; flex: 1; padding-left: 7px; outline: 0; }
    .dots { width: 30px; display: grid; place-items: center; height: 26px; }
    .fxs { width: 110px; }
    .fxs button { flex: 1; height: 24px; }
    .fx { font: italic 16px/16px "Liberation Serif", serif; }
    .fx small { font-size: 12px; }
    .expr { flex: 1; margin-left: 3px; padding-right: 4px; }
    .expr input { flex: 1; height: 24px; outline: 0; padding: 0 6px; }

    .sheet { flex: 1; min-height: 0; display: flex; }
    .view { flex: 1; min-width: 0; overflow: hidden; position: relative; }
    table { border-collapse: separate; border-spacing: 0; table-layout: fixed; width: 2600px; background: #fff; }
    th, td { padding: 0; font-weight: 400; white-space: nowrap; overflow: hidden; }
    thead th { height: 20px; background: linear-gradient(#dcdcdc, #999) right top / 1px 100% no-repeat #e6e6e6; border-bottom: 1px solid #999; color: #000; font-size: 12px; line-height: 19px; text-align: center; }
    thead th.t { text-align: left; }
    .th { display: flex; justify-content: space-between; align-items: flex-end; padding: 0 1px 0 3px; height: 19px; }
    .filter { width: 17px; height: 17px; background: linear-gradient(#fff, #f0f3f7); border: 1px solid #a9b1bb; }
    thead th.sel-c { background: #d2d2d2; border-bottom: 2px solid #217346; color: #217346; }
    .sel-c .th { height: 18px; }
    .corner svg { margin: 4px 0 0 10px; }
    tbody th { height: 27px; background: #e6e6e6; border-right: 1px solid #999; border-bottom: 1px solid #ababab; font-size: 12px; line-height: 17px; color: #222; vertical-align: bottom; text-align: center; }
    tbody th.sel-r { background: #d2d2d2; color: #217346; border-right: 2px solid #217346; }
    td { font-size: 13px; line-height: 18px; vertical-align: bottom; color: #203040; }
    td.d { border-bottom: 1px solid #c4a3a6; padding-left: 2px; }
    td.cur { position: relative; overflow: visible; }
    .cursel { position: absolute; inset: -2px -1px -2px -2px; border: 2px solid #217346; }
    .cursel::after { content: ""; position: absolute; right: -3px; bottom: -3px; width: 5px; height: 5px; background: #217346; border: solid #fff; border-width: 1px 0 0 1px; box-sizing: content-box; }
    .edge { width: 1px; margin-top: 19px; background: #999; flex: none; }
    .vbar { width: 21px; padding: 2px 3px 0; display: flex; flex-direction: column; flex: none; }
    .vbar button { height: 15px; background: #fff; border: 1px solid #ababab; }
    .track { flex: 1; background: #dadada; padding-top: 66px; }
    .track i { display: block; height: 43px; background: #fff; border: 1px solid #ababab; }
    .mouse { position: absolute; left: 88px; top: 523px; }

    .sheets { display: flex; height: 28px; flex: none; border-top: 1px solid #999; background: #e6e6e6; }
    .nav { display: flex; width: 100px; padding-left: 14px; }
    .nav button { width: 30px; height: 27px; }
    .sheets .tab { width: 83px; height: 25px; margin-top: -1px; border: solid #999; border-width: 0 1px; border-bottom: 2px solid #217346; color: #217346; font-weight: 700; font-size: 12px; background: #fff; padding: 2px; }
    .tab span { flex: 1; line-height: 20px; background: linear-gradient(#fff 20%, #b9bcc4); margin-top: 1px; }
    .add { width: 18px; margin-left: 32px; height: 27px; }
    .hbar { margin-left: auto; display: flex; align-items: center; width: 1023px; }
    .hbar button { width: 16px; height: 15px; border: 1px solid #ababab; background: #fff; }
    .hdots { width: 16px; }
    .thumb { flex: 1; height: 15px; border: 1px solid #ababab; background: #fff; margin-right: 22px; }
    .status { display: flex; height: 22px; flex: none; border-top: 1px solid #c6c6c6; background: #f3f2f1; padding-left: 8px; line-height: 20px; justify-content: space-between; }
    .status button { width: 40px; background: #c8c6c4; margin-right: 260px; height: 21px; }

    .taskbar { display: flex; height: 40px; flex: none; background: #3a3126; color: #fff; }
    .taskbar button { position: relative; height: 40px; flex: none; }
    .sys { width: 48px; }
    .sys:nth-child(3) { margin-right: 3px; }
    .app { width: 49px; }
    .run::after { content: ""; position: absolute; left: 4px; right: 5px; bottom: 0; height: 2px; background: #e9a0ee; }
    .multi::after { background: linear-gradient(90deg, #e9a0ee 31px, #b57fb9 31px); }
    .active { background: linear-gradient(90deg, #5f594f 45px, #474036 45px, #474036 46px, #59534a 46px); margin-left: -1px; }
    .active::after { content: ""; position: absolute; left: 0; right: 0; bottom: 0; height: 2px; background: #e9a0ee; }
    .tray { margin-left: auto; display: flex; align-items: center; }
    .tray button { width: 24px; }
    .tray .clock { width: 58px; flex-direction: column; font-size: 11px; line-height: 18px; }
    .tray .bell { width: 48px; margin-right: 4px; }
    .tray .peek { width: 5px; border-left: 1px solid #6b645a; }

    .pip { position: absolute; right: 3px; bottom: 43px; width: 402px; height: 171px; border: 1px solid #14141e; background: #fff; }
    .mini { width: 100%; height: 100%; }
  `;

  private big(label: string[], icon: Part, w: string, off = false) {
    return html`<button class=${classMap({ big: true, off, [w]: true })} ?disabled=${off}>
      <span class="pic">${icon}</span>
      <span class="lab">${label.map((l, i) => html`<span class="ln">${l}${i === 1 ? chev() : nothing}</span>`)}${label.length === 1 ? html`<span class="ln">${chev(off ? "#b1afad" : "#444")}</span>` : nothing}</span>
    </button>`;
  }

  private group(cls: string, name: string, body: Part, launcher = false) {
    return html`<section class="group ${cls}" aria-label=${name}>
      <div class="body">${body}</div>
      <div class="foot"><span>${name}</span>${launcher ? html`<button aria-label="${name} instellingen">${I.launcher}</button>` : nothing}</div>
    </section>`;
  }

  private ib(name: string, icon: Part, on = false) {
    return html`<button class=${classMap({ ib: true, on })} aria-label=${name}>${icon}</button>`;
  }
  private ch(name: string) {
    return html`<button class="ch" aria-label="Opties ${name}">${chev()}</button>`;
  }
  private small(name: string, icon: Part, c = "", off = false) {
    return html`<button class=${off ? "off" : ""} ?disabled=${off}><span class="slot">${icon}</span>${name}${c ? html`<span class=${c}>${chev(off ? "#b1afad" : "#444")}</span>` : nothing}</button>`;
  }

  private titleBar() {
    return html`<header class="title">
      <svg class="circuit" width="500" height="34" viewBox="0 0 500 34" fill="none" stroke="#1e653e" stroke-width="3" aria-hidden="true">
        <circle cx="9" cy="14" r="3.500"/><path d="M13 14.500h169"/><circle cx="187" cy="14.500" r="3.500"/><path d="M191 14.500h24l28 18"/>
        <circle cx="29" cy="38" r="15.500" stroke-width="5"/><path d="M20 32h17M22 36h12" stroke-width="3"/><circle cx="75" cy="33" r="4"/><path d="M80 33h110"/>
        <circle cx="283" cy="17" r="28" stroke-width="5"/><path d="M272 7h24v20M272 30l22-22" stroke-width="6"/>
        <path d="M388 34l10-9h102M452 34l34-34M470 34l30-30"/>
      </svg>
      <div class="left">
        <span class="autosave" id="as">Automatisch opslaan</span>
        <button class="toggle" role="switch" aria-checked="false" aria-labelledby="as"><span class="knob"></span></button>
        <div class="quick">
          <button aria-label="Opslaan">${I.save}</button>
          <button class="undo" aria-label="Ongedaan maken">${I.undo}</button><button aria-label="Lijst ongedaan maken">${chev("#fff")}</button>
          <button class="redo" aria-label="Opnieuw">${I.redo}</button><button aria-label="Lijst opnieuw">${chev("#4f9069")}</button>
          <button class="custom" aria-label="Werkbalk aanpassen">${I.custom}</button>
        </div>
        <div class="doc">Urenverantwoording.xlsx  -  Excel</div>
      </div>
      <label class="find">${I.search}<input type="text" placeholder="Zoeken" aria-label="Zoeken" /></label>
      <div class="right">
        <span>Max Stevens</span><span class="avatar">MS</span>
        <button class="win" aria-label="Weergaveopties">${I.display}</button><button class="win" aria-label="Minimaliseren">${I.min}</button>
        <button class="win" aria-label="Vorig formaat">${I.restore}</button><button class="win" aria-label="Sluiten">${I.close}</button>
      </div>
    </header>`;
  }

  private ribbon() {
    return html`<div class="ribbon">
      ${this.group("clip", "Klembord", html`
        ${this.big(["Plakken"], I.paste, "w-paste")}
        <div class="rows">${this.small("Knippen", I.cut)}${this.small("Kopiëren", I.copy, "gap")}${this.small("Opmaak kopiëren/plakken", I.brush)}</div>`, true)}
      ${this.group("font", "Lettertype", html`<div class="two">
        <div class="line">
          <span class="sel fam"><select aria-label="Lettertype"><option>Calibri</option></select>${chev()}</span>
          <span class="sel size"><select aria-label="Tekengrootte"><option>11</option></select>${chev()}</span>
          ${this.ib("Groter", I.big)}${this.ib("Kleiner", I.small)}
        </div>
        <div class="line">
          <button class="ib b">B</button><button class="ib i">I</button><button class="ib u">U</button>${this.ch("onderstrepen")}<span class="sp wide"></span>
          ${this.ib("Randen", I.borders)}${this.ch("randen")}<span class="sp"></span>
          ${this.ib("Opvulkleur", I.fill)}${this.ch("opvulkleur")}${this.ib("Tekstkleur", I.color)}${this.ch("tekstkleur")}
        </div></div>`, true)}
      ${this.group("align", "Uitlijning", html`<div class="two">
        <div class="line">${this.ib("Boven", A.top)}${this.ib("Midden", A.middle)}${this.ib("Onder", A.bottom, true)}<span class="sp"></span>${this.ib("Afdrukstand", I.orient)}${this.ch("afdrukstand")}</div>
        <div class="line">${this.ib("Links", A.left, true)}${this.ib("Centreren", A.center)}${this.ib("Rechts", A.right)}<span class="sp"></span>${this.ib("Inspringing verkleinen", indent("M7 8H1M3.500 5.500L1 8l2.500 2.500"))}${this.ib("Inspringing vergroten", indent("M1 8h6M4.500 5.500L7 8l-2.500 2.500"))}</div>
        </div><span class="tall"></span>
        <div class="wrapcol">${this.small("Terugloop", I.wrap)}${this.small("Samenvoegen en centreren", I.merge, "gap", true)}</div>`, true)}
      ${this.group("num", "Getal", html`<div class="two">
        <div class="line"><span class="sel nf"><select aria-label="Getalnotatie"><option>Tijd</option></select>${chev()}</span></div>
        <div class="line">${this.ib("Valuta", I.currency)}${this.ch("valuta")}<button class="ib pct">%</button><button class="ib">000</button><span class="sp"></span>${this.ib("Meer decimalen", I.decMore)}${this.ib("Minder decimalen", I.decLess)}</div></div>`, true)}
      ${this.group("styles", "Stijlen", html`
        ${this.big(["Voorwaardelijke", "opmaak"], I.cond, "w-cond")}${this.big(["Opmaken", "als tabel"], I.fmtTable, "w-tab")}
        <div class="gallery"><div class="swatches">${STYLES.map(([n, c]) => html`<button class=${c}>${n}</button>`)}</div>
          <div class="gs"><button aria-label="Omhoog">${draw(7, 5, svg`<path d="M.8 4l2.700-2.600L6.200 4" stroke="#aaa"/>`)}</button><button aria-label="Omlaag">${chev()}</button><button aria-label="Meer">${draw(8, 8, svg`<path d="M.5 1h7M1 3.600l3 3 3-3" stroke="#444" stroke-width="1.300"/>`)}</button></div></div>`)}
      ${this.group("cells", "Cellen", html`${this.big(["Invoegen"], I.insert, "w-ins")}${this.big(["Verwijderen"], I.remove, "w-del")}${this.big(["Opmaak"], I.format, "w-fmt")}`)}
      ${this.group("edit", "Bewerken", html`
        <div class="rows">${this.small("AutoSom", I.sum, "gap")}${this.small("Doorvoeren", I.fillDown, "c")}${this.small("Wissen", I.erase, "c")}</div>
        ${this.big(["Sorteren en", "filteren"], I.sort, "w-sort")}${this.big(["Zoeken en", "selecteren"], I.find, "w-find")}`)}
      ${this.group("sens", "Gevoeligheid", this.big(["Vertrouwelijkheid"], I.label, "w-sens", true))}
      <button class="collapse" aria-label="Lint samenvouwen">${draw(10, 6, svg`<path d="M.7 5.200L5 1l4.300 4.200" stroke="#444" stroke-width="1.300"/>`)}</button>
    </div>`;
  }

  private grid() {
    return html`<main class="sheet">
      <div class="view"><table>
        <colgroup><col style="width:26px" />${COLS.map(([, w]) => html`<col style="width:${w}px" />`)}<col /></colgroup>
        <thead><tr><th class="corner">${draw(12, 12, svg`<path d="M12 0v12H0z" fill="#b4b4b4"/>`)}</th>
          ${COLS.map(([n, , f]) => f
            ? html`<th scope="col" class=${classMap({ t: true, "sel-c": n === "Tijd uit" })}><div class="th">${n}<button class="filter" aria-label="Filter ${n}">${draw(7, 4, svg`<path d="M0 0h7L3.500 4z" fill="#666"/>`)}</button></div></th>`
            : html`<th scope="col">${n}</th>`)}<th></th></tr></thead>
        <tbody>${ROWS.map((r) => html`<tr><th scope="row" class=${r.n === 62 ? "sel-r" : ""}>${r.n > 70 ? nothing : r.n}</th><td></td>
          ${r.cells.map((c, i) => r.n === 62 && i === 4 ? html`<td class="d cur"><div class="cursel"></div></td>` : html`<td class="d">${c}</td>`)}
          <td colspan=${COLS.length - 6}></td></tr>`)}</tbody>
      </table>
      <svg class="mouse" width="15" height="15" viewBox="0 0 15 15" aria-hidden="true"><path d="M5 1h5v4h4v5h-4v4H5v-4H1V5h4z" fill="#fff" stroke="#000" stroke-width="1.600"/></svg>
      </div>
      <div class="edge"></div>
      <div class="vbar"><button aria-label="Omhoog schuiven">${draw(7, 4, svg`<path d="M0 4h7L3.500 0z" fill="#666"/>`)}</button><div class="track"><i></i></div></div>
    </main>`;
  }

  render() {
    return html`
      ${this.titleBar()}
      <nav class="tabs">${TABS.map((t, i) => html`<a href="#${t}" class=${classMap({ on: i === 1, ctx: i === 10 })}>${t}</a>`)}
        <div class="acts"><button class="share">${I.share}Delen</button><button class="comments">${I.comment}Opmerkingen</button></div></nav>
      ${this.ribbon()}
      <div class="formula">
        <div class="box name"><input type="text" value="F62" aria-label="Naamvak" />${draw(7, 4, svg`<path d="M0 0h7L3.500 4z" fill="#777"/>`)}</div>
        <div class="dots">${draw(2, 12, svg`<path d="M0 0h2v2H0zM0 5h2v2H0zM0 10h2v2H0z" fill="#aaa"/>`)}</div>
        <div class="box fxs"><button aria-label="Annuleren">${draw(11, 11, svg`<path d="M1 1l9 9M10 1l-9 9" stroke="#bbb" stroke-width="1.800"/>`)}</button>
          <button aria-label="Invoeren">${draw(13, 11, svg`<path d="M1 6l3.500 4L12 1" stroke="#bbb" stroke-width="2.200"/>`)}</button>
          <button class="fx" aria-label="Functie invoegen">f<small>x</small></button></div>
        <div class="box expr"><input type="text" aria-label="Formulebalk" />${draw(8, 6, svg`<path d="M.8 1L4 4.200 7.200 1" stroke="#666" stroke-width="2"/>`)}</div>
      </div>
      ${this.grid()}
      <div class="sheets">
        <div class="nav"><button aria-label="Vorig blad">${draw(5, 8, svg`<path d="M5 0v8L0 4z" fill="#bcbcbc"/>`)}</button><button aria-label="Volgend blad">${draw(5, 8, svg`<path d="M0 0v8l5-4z" fill="#bcbcbc"/>`)}</button></div>
        <button class="tab"><span>Urenstaat</span></button>
        <button class="add" aria-label="Nieuw blad">${draw(17, 17, svg`<circle cx="8.500" cy="8.500" r="7.700" stroke="#777"/><path d="M8.500 4.500v8M4.500 8.500h8" stroke="#777" stroke-width="1.600"/>`)}</button>
        <div class="hbar"><span class="hdots">${draw(2, 12, svg`<path d="M0 0h2v2H0zM0 5h2v2H0zM0 10h2v2H0z" fill="#aaa"/>`)}</span><button aria-label="Naar links">${draw(4, 7, svg`<path d="M4 0v7L0 3.500z" fill="#555"/>`)}</button><span class="thumb"></span></div>
      </div>
      <footer class="status"><span>Gereed</span><button aria-label="Normaal"></button></footer>
      <nav class="taskbar">
        <button class="sys" aria-label="Start">${T.start}</button><button class="sys" aria-label="Zoeken">${T.search}</button><button class="sys" aria-label="Taakweergave">${T.view}</button>
        ${TASKS.map(([n, i, c]) => html`<button class="app ${c}" aria-label=${n}>${i}</button>`)}
        <div class="tray"><button aria-label="Verborgen pictogrammen">${T.up}</button><button aria-label="OneDrive">${T.cloud}</button><button aria-label="Verbinding">${T.pc}</button><button aria-label="Synchronisatie">${swirl(15)}</button><button aria-label="Netwerk">${T.net}</button><button aria-label="Volume">${T.sound}</button>
          <button class="clock"><span>11:28</span><span>6-12-2019</span></button><button class="bell" aria-label="Meldingen">${T.note}</button><button class="peek" aria-label="Bureaublad"></button></div>
      </nav>
      <div class="pip">${mini()}</div>`;
  }
}
